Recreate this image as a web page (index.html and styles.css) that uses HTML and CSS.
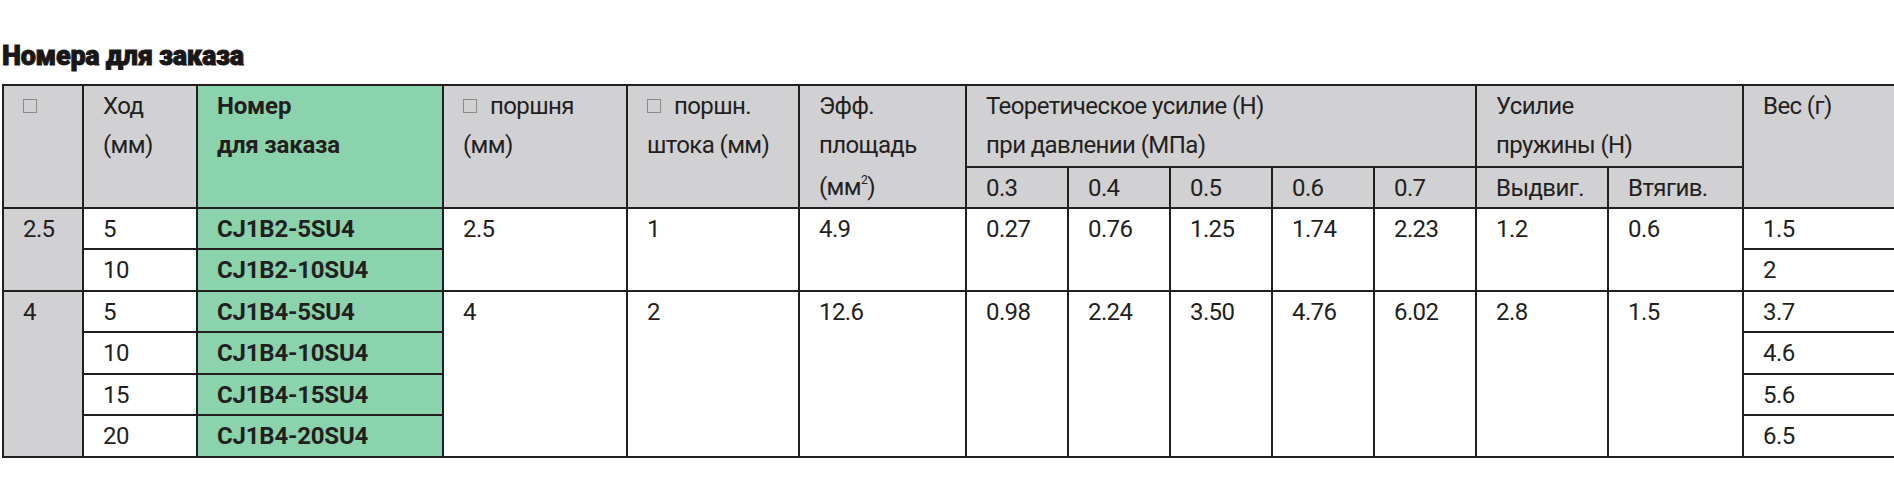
FILE: index.html
```html
<!DOCTYPE html>
<html lang="ru">
<head>
<meta charset="utf-8">
<title>Номера для заказа</title>
<link rel="stylesheet" href="styles.css">
</head>
<body>
<div class="page">
  <h1 class="title">Номера для заказа</h1>
  <table class="spec">
    <colgroup>
      <col class="c-bore">
      <col class="c-stroke">
      <col class="c-part">
      <col class="c-piston">
      <col class="c-rod">
      <col class="c-area">
      <col class="c-p"><col class="c-p"><col class="c-p"><col class="c-p"><col class="c-p">
      <col class="c-out">
      <col class="c-in">
      <col class="c-weight">
    </colgroup>
    <thead>
      <tr class="h1">
        <th rowspan="2"><span class="dia"></span></th>
        <th rowspan="2">Ход<br>(мм)</th>
        <th rowspan="2" class="green bold">Номер<br>для заказа</th>
        <th rowspan="2"><span class="dia"></span><span class="sp">поршня</span><br>(мм)</th>
        <th rowspan="2"><span class="dia"></span><span class="sp">поршн.</span><br>штока (мм)</th>
        <th rowspan="2" class="split">
          <div class="split-top">Эфф.<br>площадь</div>
          <div class="split-bot">(мм<sup>2</sup>)</div>
        </th>
        <th colspan="5">Теоретическое усилие (Н)<br>при давлении (МПа)</th>
        <th colspan="2">Усилие<br>пружины (Н)</th>
        <th rowspan="2">Вес (г)</th>
      </tr>
      <tr class="h2">
        <th>0.3</th><th>0.4</th><th>0.5</th><th>0.6</th><th>0.7</th>
        <th>Выдвиг.</th><th>Втягив.</th>
      </tr>
    </thead>
    <tbody>
      <tr class="r-a">
        <td rowspan="2" class="grey">2.5</td>
        <td>5</td>
        <td class="green bold">CJ1B2-5SU4</td>
        <td rowspan="2">2.5</td>
        <td rowspan="2">1</td>
        <td rowspan="2">4.9</td>
        <td rowspan="2">0.27</td>
        <td rowspan="2">0.76</td>
        <td rowspan="2">1.25</td>
        <td rowspan="2">1.74</td>
        <td rowspan="2">2.23</td>
        <td rowspan="2">1.2</td>
        <td rowspan="2">0.6</td>
        <td>1.5</td>
      </tr>
      <tr class="r-b">
        <td>10</td>
        <td class="green bold">CJ1B2-10SU4</td>
        <td>2</td>
      </tr>
      <tr class="r-a">
        <td rowspan="4" class="grey">4</td>
        <td>5</td>
        <td class="green bold">CJ1B4-5SU4</td>
        <td rowspan="4">4</td>
        <td rowspan="4">2</td>
        <td rowspan="4">12.6</td>
        <td rowspan="4">0.98</td>
        <td rowspan="4">2.24</td>
        <td rowspan="4">3.50</td>
        <td rowspan="4">4.76</td>
        <td rowspan="4">6.02</td>
        <td rowspan="4">2.8</td>
        <td rowspan="4">1.5</td>
        <td>3.7</td>
      </tr>
      <tr class="r-b">
        <td>10</td>
        <td class="green bold">CJ1B4-10SU4</td>
        <td>4.6</td>
      </tr>
      <tr class="r-a">
        <td>15</td>
        <td class="green bold">CJ1B4-15SU4</td>
        <td>5.6</td>
      </tr>
      <tr class="r-b">
        <td>20</td>
        <td class="green bold">CJ1B4-20SU4</td>
        <td>6.5</td>
      </tr>
    </tbody>
  </table>
</div>
</body>
</html>
```
FILE: styles.css
```css
html, body {
  margin: 0;
  padding: 0;
  background: #ffffff;
}
body {
  overflow: hidden;
  font-family: Roboto, "Liberation Sans", Arial, sans-serif;
  color: #231f20;
}
.page {
  width: 1920px;
  padding: 0 0 0 2px;
}
.title {
  margin: 0;
  height: 84px;
  padding-top: 39px;
  box-sizing: border-box;
  font-family: Roboto, "DejaVu Sans", sans-serif;
  font-weight: 900;
  font-size: 27px;
  line-height: 34px;
  letter-spacing: -0.3px;
  color: #1a1718;
  -webkit-text-stroke: 0.9px #1a1718;
  white-space: nowrap;
}
.spec {
  border-collapse: collapse;
  table-layout: fixed;
  width: 1900px;
  border: 2px solid #231f20;
  font-size: 24px;
  letter-spacing: -0.6px;
}
.c-bore { width: 80px; }
.c-stroke { width: 114px; }
.c-part { width: 246px; }
.c-piston { width: 184px; }
.c-rod { width: 172px; }
.c-area { width: 167px; }
.c-p { width: 102px; }
.c-out { width: 132px; }
.c-in { width: 135px; }
.c-weight { width: 160px; }

.spec th, .spec td {
  border: 2px solid #231f20;
  padding: 1px 0 0 19px;
  text-align: left;
  vertical-align: top;
  font-weight: normal;
  line-height: 38px;
  white-space: nowrap;
  overflow: hidden;
}
.spec .h1 th {
  line-height: 39px;
}
.spec thead th {
  background: #d1d0d2;
}
.spec .h1 { height: 82px; }
.spec .h2 { height: 41px; }
.spec .r-a { height: 41px; }
.spec .r-b { height: 42px; }

.spec .green, .spec thead th.green {
  background: #8bd3ad;
}
.spec .grey {
  background: #d1d0d2;
}
.bold {
  font-weight: bold !important;
  letter-spacing: -0.2px;
}
.dia {
  display: inline-block;
  width: 12px;
  height: 12px;
  border: 1px solid #8c8a8b;
  vertical-align: 1px;
  margin-left: 0;
}
.sp {
  margin-left: 13px;
}
.spec th.split {
  padding: 0 0 0 19px;
}
.split-top {
  height: 81px;
  padding-top: 1px;
  box-sizing: border-box;
}
.split-bot {
  height: 39px;
  padding-top: 1px;
  box-sizing: border-box;
  line-height: 38px;
}
sup {
  font-size: 12px;
  vertical-align: 11px;
  line-height: 0;
}
```
